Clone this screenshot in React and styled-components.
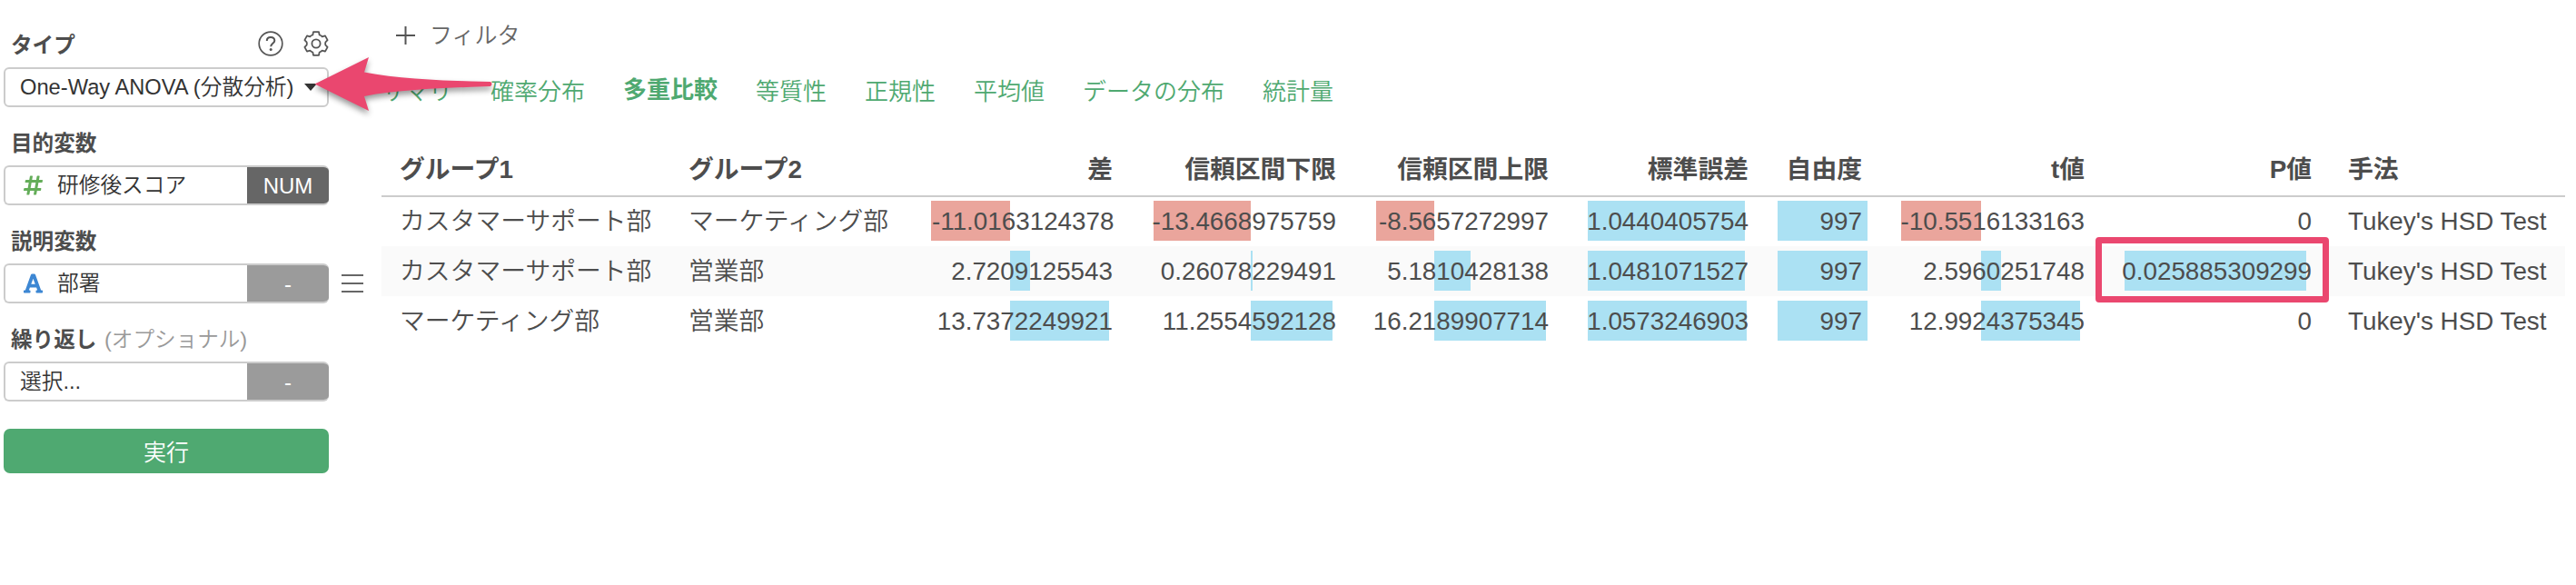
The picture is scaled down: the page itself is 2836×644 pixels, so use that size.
import React from 'react'
import styled, { createGlobalStyle, css } from 'styled-components'
import { FaFont, FaHashtag } from 'react-icons/fa'

const GlobalStyle = createGlobalStyle`
  * {
    box-sizing: border-box;
  }

  body {
    margin: 0;
    background: #fff;
    color: #4d4d4d;
    font-family: 'Liberation Sans', 'Noto Sans CJK JP', sans-serif;
    font-size: 24px;
    font-weight: 350;
  }
`

const Page = styled.div`
  display: flex;
  position: relative;
  height: 644px;
  overflow: hidden;
`

const Sidebar = styled.aside`
  flex: none;
  width: 420px;
  padding: 24px 0 0 4px;
`

const LabelRow = styled.div`
  display: flex;
  align-items: center;
  justify-content: space-between;
  width: 358px;
  height: 50px;
  padding: 0 0 2px 8px;
`

const Label = styled.div`
  padding-top: 3px;
  font-size: 23.6px;
  font-weight: 700;
  line-height: 30px;
  white-space: nowrap;
`

const Optional = styled.span`
  margin-left: 2px;
  color: #999;
  font-weight: 350;
`

const Tools = styled.div`
  display: flex;
  gap: 22px;
`

const FieldRow = styled.div`
  display: flex;
  align-items: center;
  gap: 14px;
  height: 44px;
  margin-bottom: 14px;
`

const Field = styled.div`
  display: flex;
  align-items: center;
  flex: none;
  width: 358px;
  height: 44px;
  overflow: hidden;
  border: 2px solid #ccc;
  border-radius: 6px;
  color: #333;

  ${(props) => props.$split && css`
    border-right: none;
  `}
`

const Value = styled.div`
  display: flex;
  align-items: center;
  flex: 1;
  padding-left: 16px;
  font-size: 23.7px;
  line-height: 40px;
  white-space: nowrap;
`

const TypeIcon = styled.span`
  display: flex;
  width: 21px;
  margin: 0 16px 0 4px;
  color: ${(props) => props.$color};
  font-size: 24px;
`

const Badge = styled.div`
  flex: none;
  width: 90px;
  height: 44px;
  background: ${(props) => (props.$active ? '#666' : '#9b9b9b')};
  color: #fff;
  line-height: 45px;
  text-align: center;
`

const Caret = styled.span`
  width: 0;
  margin-right: 11px;
  border: 7px solid transparent;
  border-top: 8px solid #333;
  border-bottom: 0;
`

const RunButton = styled.button`
  width: 358px;
  height: 49px;
  margin-top: 16px;
  padding: 0 0 2px;
  border: none;
  border-radius: 7px;
  background: #4fa971;
  color: #fff;
  font-family: inherit;
  font-size: 25px;
  font-weight: 350;
`

const Main = styled.main`
  flex: none;
  width: 2404px;
`

const Filter = styled.div`
  display: flex;
  align-items: center;
  gap: 16px;
  height: 72px;
  padding: 6px 0 0 16px;
  color: #666;
`

const FilterLabel = styled.span`
  padding-bottom: 4px;
  font-size: 25px;
`

const Tabs = styled.nav`
  display: flex;
  gap: 42px;
  height: 84px;
  padding-top: 10px;
`

const Tab = styled.a`
  position: relative;
  top: ${(props) => (props.$active ? '-2px' : '0')};
  color: #4fa971;
  font-size: 26px;
  font-weight: ${(props) => (props.$active ? 700 : 350)};
  line-height: 38px;
  white-space: nowrap;
`

const Row = styled.div`
  display: grid;
  grid-template-columns: 318px 268px 230px 246px 234px 220px 125px 245px 250px 268px;
  height: 55px;
  background: ${(props) => (props.$striped ? '#fafafa' : 'transparent')};
  font-size: 27.8px;
  line-height: 55px;
`

const HeaderRow = styled(Row)`
  height: 61px;
  margin-bottom: -1px;
  border-bottom: 2px solid #ccc;
  font-weight: 700;
  line-height: 62px;
`

const Cell = styled.div`
  position: relative;
  padding: 0 11px 0 ${(props) => props.$indent || 20}px;
  text-align: ${(props) => (props.$numeric ? 'right' : 'left')};
  white-space: nowrap;
`

const Bar = styled.div`
  position: absolute;
  top: 5px;
  height: 44px;
  background: ${(props) => (props.$negative ? '#eaa59c' : '#abe1f3')};
`

const CellText = styled.span`
  position: relative;
`

const Highlight = styled.div`
  position: absolute;
  top: -10px;
  left: 1px;
  width: 257px;
  height: 72px;
  border: 7px solid #ea476f;
  border-radius: 4px;
`

const Arrow = styled.svg`
  position: absolute;
  top: 50px;
  left: 330px;
  filter: drop-shadow(0 4px 3px rgba(0, 0, 0, 0.4));
`

const columns = [
  { title: 'グループ1', indent: 20 },
  { title: 'グループ2', indent: 20 },
  { title: '差', numeric: true },
  { title: '信頼区間下限', numeric: true },
  { title: '信頼区間上限', numeric: true },
  { title: '標準誤差', numeric: true },
  { title: '自由度', numeric: true },
  { title: 't値', numeric: true },
  { title: 'P値', numeric: true },
  { title: '手法', indent: 29 },
]

// bar: [offset from the cell's left edge, width]
const rows = [
  [
    { text: 'カスタマーサポート部' },
    { text: 'マーケティング部' },
    { text: '-11.0163124378', bar: [19, 87], negative: true },
    { text: '-13.4668975759', bar: [34, 107], negative: true },
    { text: '-8.5657272997', bar: [33, 64], negative: true },
    { text: '1.0440405754', bar: [32, 173] },
    { text: '997', bar: [21, 99] },
    { text: '-10.5516133163', bar: [32, 88], negative: true },
    { text: '0' },
    { text: "Tukey's HSD Test" },
  ],
  [
    { text: 'カスタマーサポート部' },
    { text: '営業部' },
    { text: '2.7209125543', bar: [106, 22] },
    { text: '0.26078229491', bar: [141, 2] },
    { text: '5.1810428138', bar: [97, 40] },
    { text: '1.0481071527', bar: [32, 173] },
    { text: '997', bar: [21, 99] },
    { text: '2.5960251748', bar: [120, 22] },
    { text: '0.025885309299', bar: [33, 200], highlight: true },
    { text: "Tukey's HSD Test" },
  ],
  [
    { text: 'マーケティング部' },
    { text: '営業部' },
    { text: '13.7372249921', bar: [106, 109] },
    { text: '11.2554592128', bar: [141, 90] },
    { text: '16.2189907714', bar: [97, 123] },
    { text: '1.0573246903', bar: [32, 175] },
    { text: '997', bar: [21, 99] },
    { text: '12.9924375345', bar: [120, 109] },
    { text: '0' },
    { text: "Tukey's HSD Test" },
  ],
]

const tabs = ['サマリ', '確率分布', '多重比較', '等質性', '正規性', '平均値', 'データの分布', '統計量']

const HelpIcon = () => (
  <svg width="28" height="28" viewBox="0 0 28 28" fill="none" stroke="#555" strokeWidth="1.7">
    <circle cx="14" cy="14" r="12.8" />
    <path d="M9.8 11c0-2.6 1.8-4 4.2-4s4.3 1.4 4.3 3.7c0 3.1-4.1 3.2-4.1 6.6" strokeWidth="2" />
    <circle cx="14.2" cy="20.6" r="1.5" fill="#555" stroke="none" />
  </svg>
)

const GearIcon = () => (
  <svg width="28" height="28" viewBox="0 0 28 28" fill="none" stroke="#555" strokeWidth="1.8" strokeLinejoin="round">
    <path d="M11 1.200h6l.7 3.300q1.800.5 3 1.900l3.300-1 2.600 4.700-2.200 2.200q-.6 1.700 0 3.400l2.200 2.200-2.600 4.700-3.300-1q-1.200 1.400-3 1.900l-.7 3.300h-6l-.7-3.300q-1.800-.5-3-1.900l-3.300 1-2.600-4.700 2.200-2.200q.6-1.700 0-3.400l-2.200-2.200 2.600-4.700 3.300 1q1.200-1.400 3-1.900z" />
    <circle cx="14" cy="14" r="4.6" />
  </svg>
)

const MenuIcon = () => (
  <svg width="24" height="22" viewBox="0 0 24 22" stroke="#666" strokeWidth="2">
    <path d="M0 2h24M0 11h24M0 20h24" />
  </svg>
)

const PlusIcon = () => (
  <svg width="21" height="20" viewBox="0 0 21 20" stroke="#555" strokeWidth="2">
    <path d="M0 10h21M10.5 0v20" />
  </svg>
)

const App = () => {
  return (
    <Page>
      <GlobalStyle />

      <Sidebar>
        <LabelRow>
          <Label>タイプ</Label>
          <Tools>
            <HelpIcon />
            <GearIcon />
          </Tools>
        </LabelRow>
        <FieldRow>
          <Field>
            <Value>One-Way ANOVA (分散分析)</Value>
            <Caret />
          </Field>
        </FieldRow>

        <LabelRow>
          <Label>目的変数</Label>
        </LabelRow>
        <FieldRow>
          <Field $split>
            <Value>
              <TypeIcon $color="#64ad59"><FaHashtag /></TypeIcon>
              研修後スコア
            </Value>
            <Badge $active>NUM</Badge>
          </Field>
        </FieldRow>

        <LabelRow>
          <Label>説明変数</Label>
        </LabelRow>
        <FieldRow>
          <Field $split>
            <Value>
              <TypeIcon $color="#3d87d3"><FaFont /></TypeIcon>
              部署
            </Value>
            <Badge>-</Badge>
          </Field>
          <MenuIcon />
        </FieldRow>

        <LabelRow>
          <Label>繰り返し <Optional>(オプショナル)</Optional></Label>
        </LabelRow>
        <FieldRow>
          <Field $split>
            <Value>選択...</Value>
            <Badge>-</Badge>
          </Field>
        </FieldRow>

        <RunButton>実行</RunButton>
      </Sidebar>

      <Main>
        <Filter>
          <PlusIcon />
          <FilterLabel>フィルタ</FilterLabel>
        </Filter>

        <Tabs>
          {tabs.map((tab) => (
            <Tab key={tab} $active={tab === '多重比較'}>{tab}</Tab>
          ))}
        </Tabs>

        <HeaderRow>
          {columns.map((column) => (
            <Cell key={column.title} $numeric={column.numeric} $indent={column.indent}>
              {column.title}
            </Cell>
          ))}
        </HeaderRow>
        {rows.map((row, rowIndex) => (
          <Row key={rowIndex} $striped={rowIndex % 2 === 1}>
            {row.map((cell, i) => (
              <Cell key={columns[i].title} $numeric={columns[i].numeric} $indent={columns[i].indent}>
                {cell.bar && (
                  <Bar $negative={cell.negative} style={{ left: cell.bar[0], width: cell.bar[1] }} />
                )}
                <CellText>{cell.text}</CellText>
                {cell.highlight && <Highlight />}
              </Cell>
            ))}
          </Row>
        ))}
      </Main>

      <Arrow width="220" height="80" viewBox="0 0 220 80">
        <path d="M16.500 42.500L76 13L71 29.500C110 37 160 39 210 40Q213 42.500 210 45C160 47 110 48 71 56L76 72Z" fill="#ea476f" />
      </Arrow>
    </Page>
  )
}

export default App
